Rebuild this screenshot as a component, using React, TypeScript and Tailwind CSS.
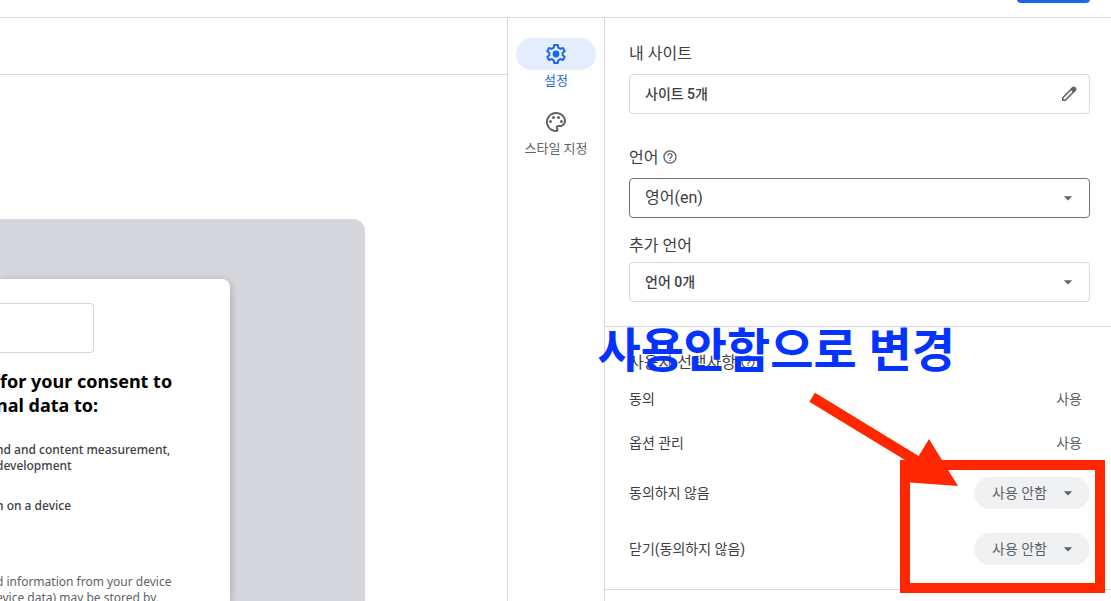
import { useState } from 'react';
import type { ReactNode } from 'react';
import { MdArrowDropDown, MdHelpOutline, MdOutlinePalette } from 'react-icons/md';

const previewSections = [
  { id: 'ads', lines: ['nd and content measurement,', 'development'] },
  { id: 'storage', lines: ['n on a device'] },
];

function SettingsIcon() {
  return (
    <svg viewBox="0 0 24 24" className="size-6" fill="none" stroke="currentColor" strokeWidth="2" strokeLinejoin="round">
      <path d="M10.200 3h3.600l.5 2.700 2 1.200 2.600-.9 1.800 3.100-2.100 1.800v2.200l2.100 1.800-1.800 3.100-2.600-.9-2 1.200-.5 2.700h-3.600l-.5-2.700-2-1.200-2.600.9-1.800-3.100 2.100-1.800v-2.200L3.300 9.100 5.100 6l2.600.9 2-1.200z" />
      <circle cx="12" cy="12" r="3.400" fill="currentColor" stroke="none" />
    </svg>
  );
}

function PencilIcon() {
  return (
    <svg viewBox="0 0 20 20" className="size-5 text-[#5f6368]" fill="none" stroke="currentColor" strokeWidth="1.6" strokeLinejoin="round">
      <path d="M3.800 16.200v-2.500L13.200 4.300l2.500 2.500L6.300 16.200z" />
      <path d="M12.200 5.300l1.700-1.700a1.200 1.200 0 0 1 1.700 0l.8.8a1.200 1.200 0 0 1 0 1.700l-1.700 1.700z" fill="currentColor" />
    </svg>
  );
}

function FieldLabel({ htmlFor, children }: { htmlFor: string; children: ReactNode }) {
  return (
    <label htmlFor={htmlFor} className="flex h-6 items-center text-base text-[#3c4043]">
      {children}
    </label>
  );
}

function HelpButton({ label }: { label: string }) {
  return (
    <button type="button" aria-label={label} className="flex h-[22px] items-center self-start text-[#5f6368]">
      <MdHelpOutline size={16} />
    </button>
  );
}

function OptionSelect({ id }: { id: string }) {
  const [value, setValue] = useState('off');

  return (
    <div className="relative">
      <select
        id={id}
        value={value}
        onChange={(e) => setValue(e.target.value)}
        className="h-8 w-[116px] appearance-none rounded-full bg-[#f0f1f3] pl-[18px] text-sm text-[#5f6368]"
      >
        <option value="off">사용 안함</option>
        <option value="on">사용</option>
      </select>
      <MdArrowDropDown size={20} className="pointer-events-none absolute top-1.5 right-3 text-[#5f6368]" />
    </div>
  );
}

function Preview() {
  return (
    <main className="flex min-w-0 flex-1 flex-col">
      <div className="h-[57px] shrink-0 border-b border-[#d6d7d9]" />
      <div className="mt-36 mr-[142px] flex-1 overflow-hidden rounded-tr-xl bg-[#d6d7dc] pt-[60px] pr-[135px] font-['Noto_Sans',sans-serif]">
        <div className="h-full rounded-tr-lg bg-white pt-6 whitespace-nowrap shadow-[0_2px_8px_rgba(0,0,0,0.25)]">
          <div className="h-[50px] w-[94px] rounded-r border border-l-0 border-[#d6d7dc]" />
          {/* the dialog runs past the left edge, so most lines start mid-letter */}
          <h2 className="mt-4 text-lg leading-6 font-bold text-black">
            <span className="block">for your consent to</span>
            <span className="-ml-1 block">nal data to:</span>
          </h2>
          <div className="-ml-1 mt-[25px] flex flex-col gap-6 text-xs leading-4 font-medium text-[#3c4043]">
            {previewSections.map((section) => (
              <p key={section.id}>
                {section.lines.map((line) => (
                  <span key={line} className="block">{line}</span>
                ))}
              </p>
            ))}
          </div>
          <p className="-ml-1 mt-[60px] text-xs leading-4 text-[#5f6368]">
            d information from your device
            <br />
            evice data) may be stored by,
          </p>
        </div>
      </div>
    </main>
  );
}

function Rail() {
  return (
    <nav className="flex w-[98px] shrink-0 flex-col items-center gap-3.5 border-x border-[#d6d7dc] pt-5 text-[13px] leading-[22px]">
      <button type="button" className="flex w-20 flex-col items-center text-[#1967e8]">
        <span className="flex h-8 w-20 items-center justify-center rounded-full bg-[#e3edfd]">
          <SettingsIcon />
        </span>
        설정
      </button>
      <button type="button" className="flex w-20 flex-col items-center text-[#5f6368]">
        <span className="flex h-8 w-20 items-center justify-center">
          <MdOutlinePalette size={24} />
        </span>
        스타일 지정
      </button>
    </nav>
  );
}

function SiteSettings() {
  return (
    <section className="flex flex-col border-b border-[#d6d7dc] pt-6 pr-[21px] pb-6 pl-6">
      <FieldLabel htmlFor="sites">내 사이트</FieldLabel>
      <button
        id="sites"
        type="button"
        className="mt-2 flex h-10 items-center justify-between rounded border border-[#d6d7dc] pr-2.5 pl-[15px] text-sm font-medium text-[#3c4043]"
      >
        사이트 5개
        <PencilIcon />
      </button>

      <div className="mt-8 flex items-center gap-1">
        <FieldLabel htmlFor="language">언어</FieldLabel>
        <HelpButton label="언어 도움말" />
      </div>
      <div className="relative mt-2">
        <select
          id="language"
          className="h-10 w-full appearance-none rounded border border-[#70757a] pl-[15px] text-base text-[#3c4043]"
        >
          <option>영어(en)</option>
        </select>
        <MdArrowDropDown size={20} className="pointer-events-none absolute top-2.5 right-3 text-[#5f6368]" />
      </div>

      <div className="mt-4">
        <FieldLabel htmlFor="extra">추가 언어</FieldLabel>
      </div>
      <div className="relative mt-1">
        <select
          id="extra"
          className="h-10 w-full appearance-none rounded border border-[#d6d7dc] pl-[15px] text-sm font-medium text-[#3c4043]"
        >
          <option>언어 0개</option>
        </select>
        <MdArrowDropDown size={20} className="pointer-events-none absolute top-2.5 right-3 text-[#5f6368]" />
      </div>
    </section>
  );
}

function UserOptions() {
  return (
    <section className="relative border-b border-[#d6d7dc] pt-6 pr-[21px] pb-6 pl-6 text-sm text-[#3c4043]">
      <div className="flex h-6 items-center gap-1">
        <h3 className="text-base">사용자 선택사항</h3>
        <HelpButton label="사용자 선택사항 도움말" />
      </div>
      <div className="mt-3 flex h-6 items-center justify-between pr-2">
        <span>동의</span>
        <span className="text-[#5f6368]">사용</span>
      </div>
      <div className="mt-5 flex h-6 items-center justify-between pr-2">
        <span>옵션 관리</span>
        <span className="text-[#5f6368]">사용</span>
      </div>
      <div className="mt-[22px] flex h-8 items-center justify-between">
        <label htmlFor="decline">동의하지 않음</label>
        <OptionSelect id="decline" />
      </div>
      <div className="mt-6 flex h-8 items-center justify-between">
        <label htmlFor="close">닫기(동의하지 않음)</label>
        <OptionSelect id="close" />
      </div>

      {/* annotations drawn over the panel */}
      <p className="pointer-events-none absolute top-0 right-[156px] text-[47px] leading-[48px] font-bold whitespace-nowrap text-[#0433ff]">
        사용안함으로 변경
      </p>
      <div className="pointer-events-none absolute top-[133px] right-[6px] h-[133px] w-[205px] border-[10px] border-[#ff2600]" />
      <svg
        viewBox="809 392 150 95"
        className="pointer-events-none absolute top-[65px] right-[152px] h-[95px] w-[150px]"
        fill="#ff2600"
      >
        <path d="M815 392.700L918.700 455.900L929 439L958 486L903 482L913.200 465L809.300 401.700z" />
      </svg>
    </section>
  );
}

export default function App() {
  return (
    <div className="flex h-screen flex-col overflow-hidden bg-white font-[Roboto,'Noto_Sans_CJK_KR',sans-serif]">
      <header className="flex h-[18px] shrink-0 items-end justify-end overflow-hidden border-b border-[#d6d7d9] pr-[21px] pb-3.5">
        <button type="button" aria-label="게시" className="h-9 w-[73px] shrink-0 rounded bg-[#1967e8]" />
      </header>
      <div className="flex min-h-0 flex-1">
        <Preview />
        <Rail />
        <aside className="w-[506px] shrink-0">
          <SiteSettings />
          <UserOptions />
        </aside>
      </div>
    </div>
  );
}
